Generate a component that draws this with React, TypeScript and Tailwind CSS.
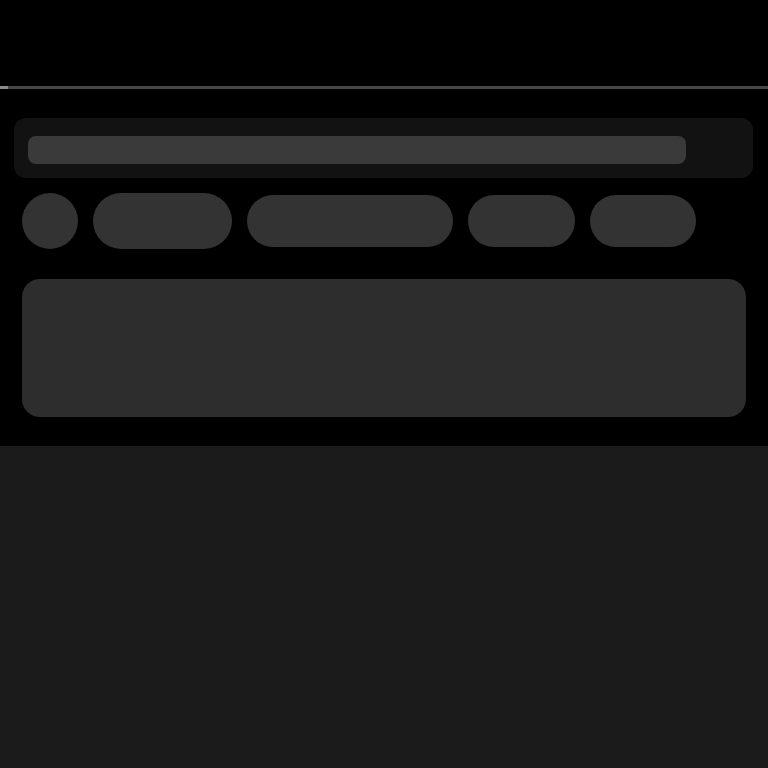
import React from "react";

export default function App() {
  return (
    <div className="w-[768px] h-[768px] bg-black flex flex-col overflow-hidden" style={{ fontFamily: "Inter, sans-serif" }}>
      <div className="h-[86px] shrink-0" />
      <div className="h-[3px] shrink-0 bg-[#464646] flex">
        <div className="w-[8px] h-full bg-[#8a8a8a]" />
      </div>
      <div className="shrink-0 pt-[29px] px-[14px]">
        <div className="w-[739px] h-[60px] rounded-xl bg-[#121212] pt-[18px] pl-[14px]">
          <div className="w-[658px] h-[28px] rounded-lg bg-[#3a3a3a]" />
        </div>
      </div>
      <div className="shrink-0 mt-[15px] px-[22px] h-[56px] flex items-center">
        <div className="w-[56px] h-[56px] rounded-full bg-[#333333]" />
        <div className="ml-[15px] w-[139px] h-[56px] rounded-full bg-[#333333]" />
        <div className="ml-[15px] w-[206px] h-[52px] rounded-full bg-[#333333]" />
        <div className="ml-[15px] w-[107px] h-[52px] rounded-full bg-[#333333]" />
        <div className="ml-[15px] w-[106px] h-[52px] rounded-full bg-[#333333]" />
      </div>
      <div className="shrink-0 mt-[30px] px-[22px]">
        <div className="w-[724px] h-[138px] rounded-[18px] bg-[#2d2d2d]" />
      </div>
      <div className="mt-[29px] flex-1 bg-[#1b1b1b]" />
    </div>
  );
}
